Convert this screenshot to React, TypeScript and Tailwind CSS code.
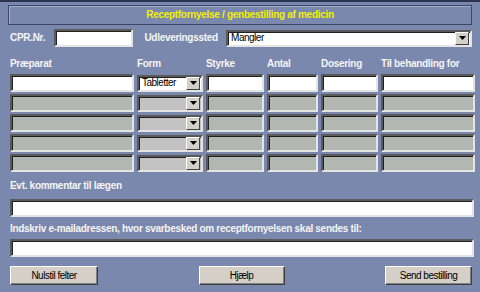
const font = { fontFamily: '"Liberation Sans", Arial, sans-serif' };

const inset =
  'border-2 border-t-[#5a5a5a] border-l-[#5a5a5a] border-b-[#e4e4e4] border-r-[#e4e4e4] shadow-[inset_1px_1px_0_#202020]';

function Field({ className = '', disabled = false }: { className?: string; disabled?: boolean }) {
  return <div className={`h-[18px] ${inset} ${disabled ? 'bg-[#b3b7b1]' : 'bg-white'} ${className}`} />;
}

function Arrow() {
  return (
    <div className="flex h-[13px] w-[14px] items-center justify-center border border-t-white border-l-white border-b-[#404040] border-r-[#404040] bg-[#d4d0c8]">
      <svg width="7" height="4" viewBox="0 0 7 4">
        <path d="M0 0h7L3.5 4z" fill="#000" />
      </svg>
    </div>
  );
}

function Select({ value, className = '', disabled = false }: { value?: string; className?: string; disabled?: boolean }) {
  return (
    <div
      className={`flex h-[17px] items-center justify-between pl-[3px] pr-[1px] text-[10px] font-normal tracking-[-0.5px] text-black ${inset} ${
        disabled ? 'bg-[#c2c2c2]' : 'bg-white'
      } ${className}`}
    >
      <span>{value}</span>
      <Arrow />
    </div>
  );
}

function Button({ label, className = '' }: { label: string; className?: string }) {
  return (
    <div
      className={`flex h-[19px] items-center justify-center border border-t-white border-l-white border-b-[#404040] border-r-[#404040] bg-[#d4d0c8] text-[10px] font-normal tracking-[-0.5px] text-black shadow-[inset_-1px_-1px_0_#808080] ${className}`}
    >
      {label}
    </div>
  );
}

const cols = 'grid grid-cols-[124px_66px_58px_51px_57px_94px] gap-x-[3px]';

export default function App() {
  const rows = [0, 1, 2, 3, 4];
  return (
    <div
      style={font}
      className="h-[292px] w-[480px] overflow-hidden border-t-2 border-[#2e3350] bg-[#7b88ae] px-[8px] pt-[3px] text-[10px] font-bold leading-[12px] tracking-[-0.3px] text-[#f4f4f4]"
    >
      <div className="flex h-[20px] items-center justify-center border border-[#3e4668] text-[#f0f000] shadow-[inset_1px_1px_0_#a4aecb]">
        Receptfornyelse / genbestilling af medicin
      </div>

      <div className="mt-[4px] flex items-center pl-[2px]">
        <span className="w-[44px]">CPR.Nr.</span>
        <Field className="w-[80px]" />
        <span className="ml-[11px] w-[82px]">Udleveringssted</span>
        <Select value="Mangler" className="w-[247px]" />
      </div>

      <div className={`mt-[11px] pl-[2px] ${cols}`}>
        <span>Præparat</span>
        <span>Form</span>
        <span>Styrke</span>
        <span>Antal</span>
        <span>Dosering</span>
        <span>Til behandling for</span>
      </div>

      <div className="mt-[4px] flex flex-col gap-y-[2px] pl-[2px]">
        {rows.map((r) => (
          <div key={r} className={`${cols} items-center`}>
            <Field disabled={r > 0} />
            <Select value={r === 0 ? 'Tabletter' : ''} disabled={r > 0} />
            <Field disabled={r > 0} />
            <Field disabled={r > 0} />
            <Field disabled={r > 0} />
            <Field disabled={r > 0} />
          </div>
        ))}
      </div>

      <div className="mt-[8px] pl-[2px]">Evt. kommentar til lægen</div>
      <Field className="ml-[2px] mt-[7px] w-[464px]" />

      <div className="mt-[6px] pl-[2px]">Indskriv e-mailadressen, hvor svarbesked om receptfornyelsen skal sendes til:</div>
      <Field className="ml-[2px] mt-[4px] w-[464px]" />

      <div className="mt-[9px] flex items-center justify-between pl-[2px]">
        <Button label="Nulstil felter" className="w-[88px]" />
        <Button label="Hjælp" className="w-[86px]" />
        <Button label="Send bestilling" className="w-[87px]" />
      </div>
    </div>
  );
}
